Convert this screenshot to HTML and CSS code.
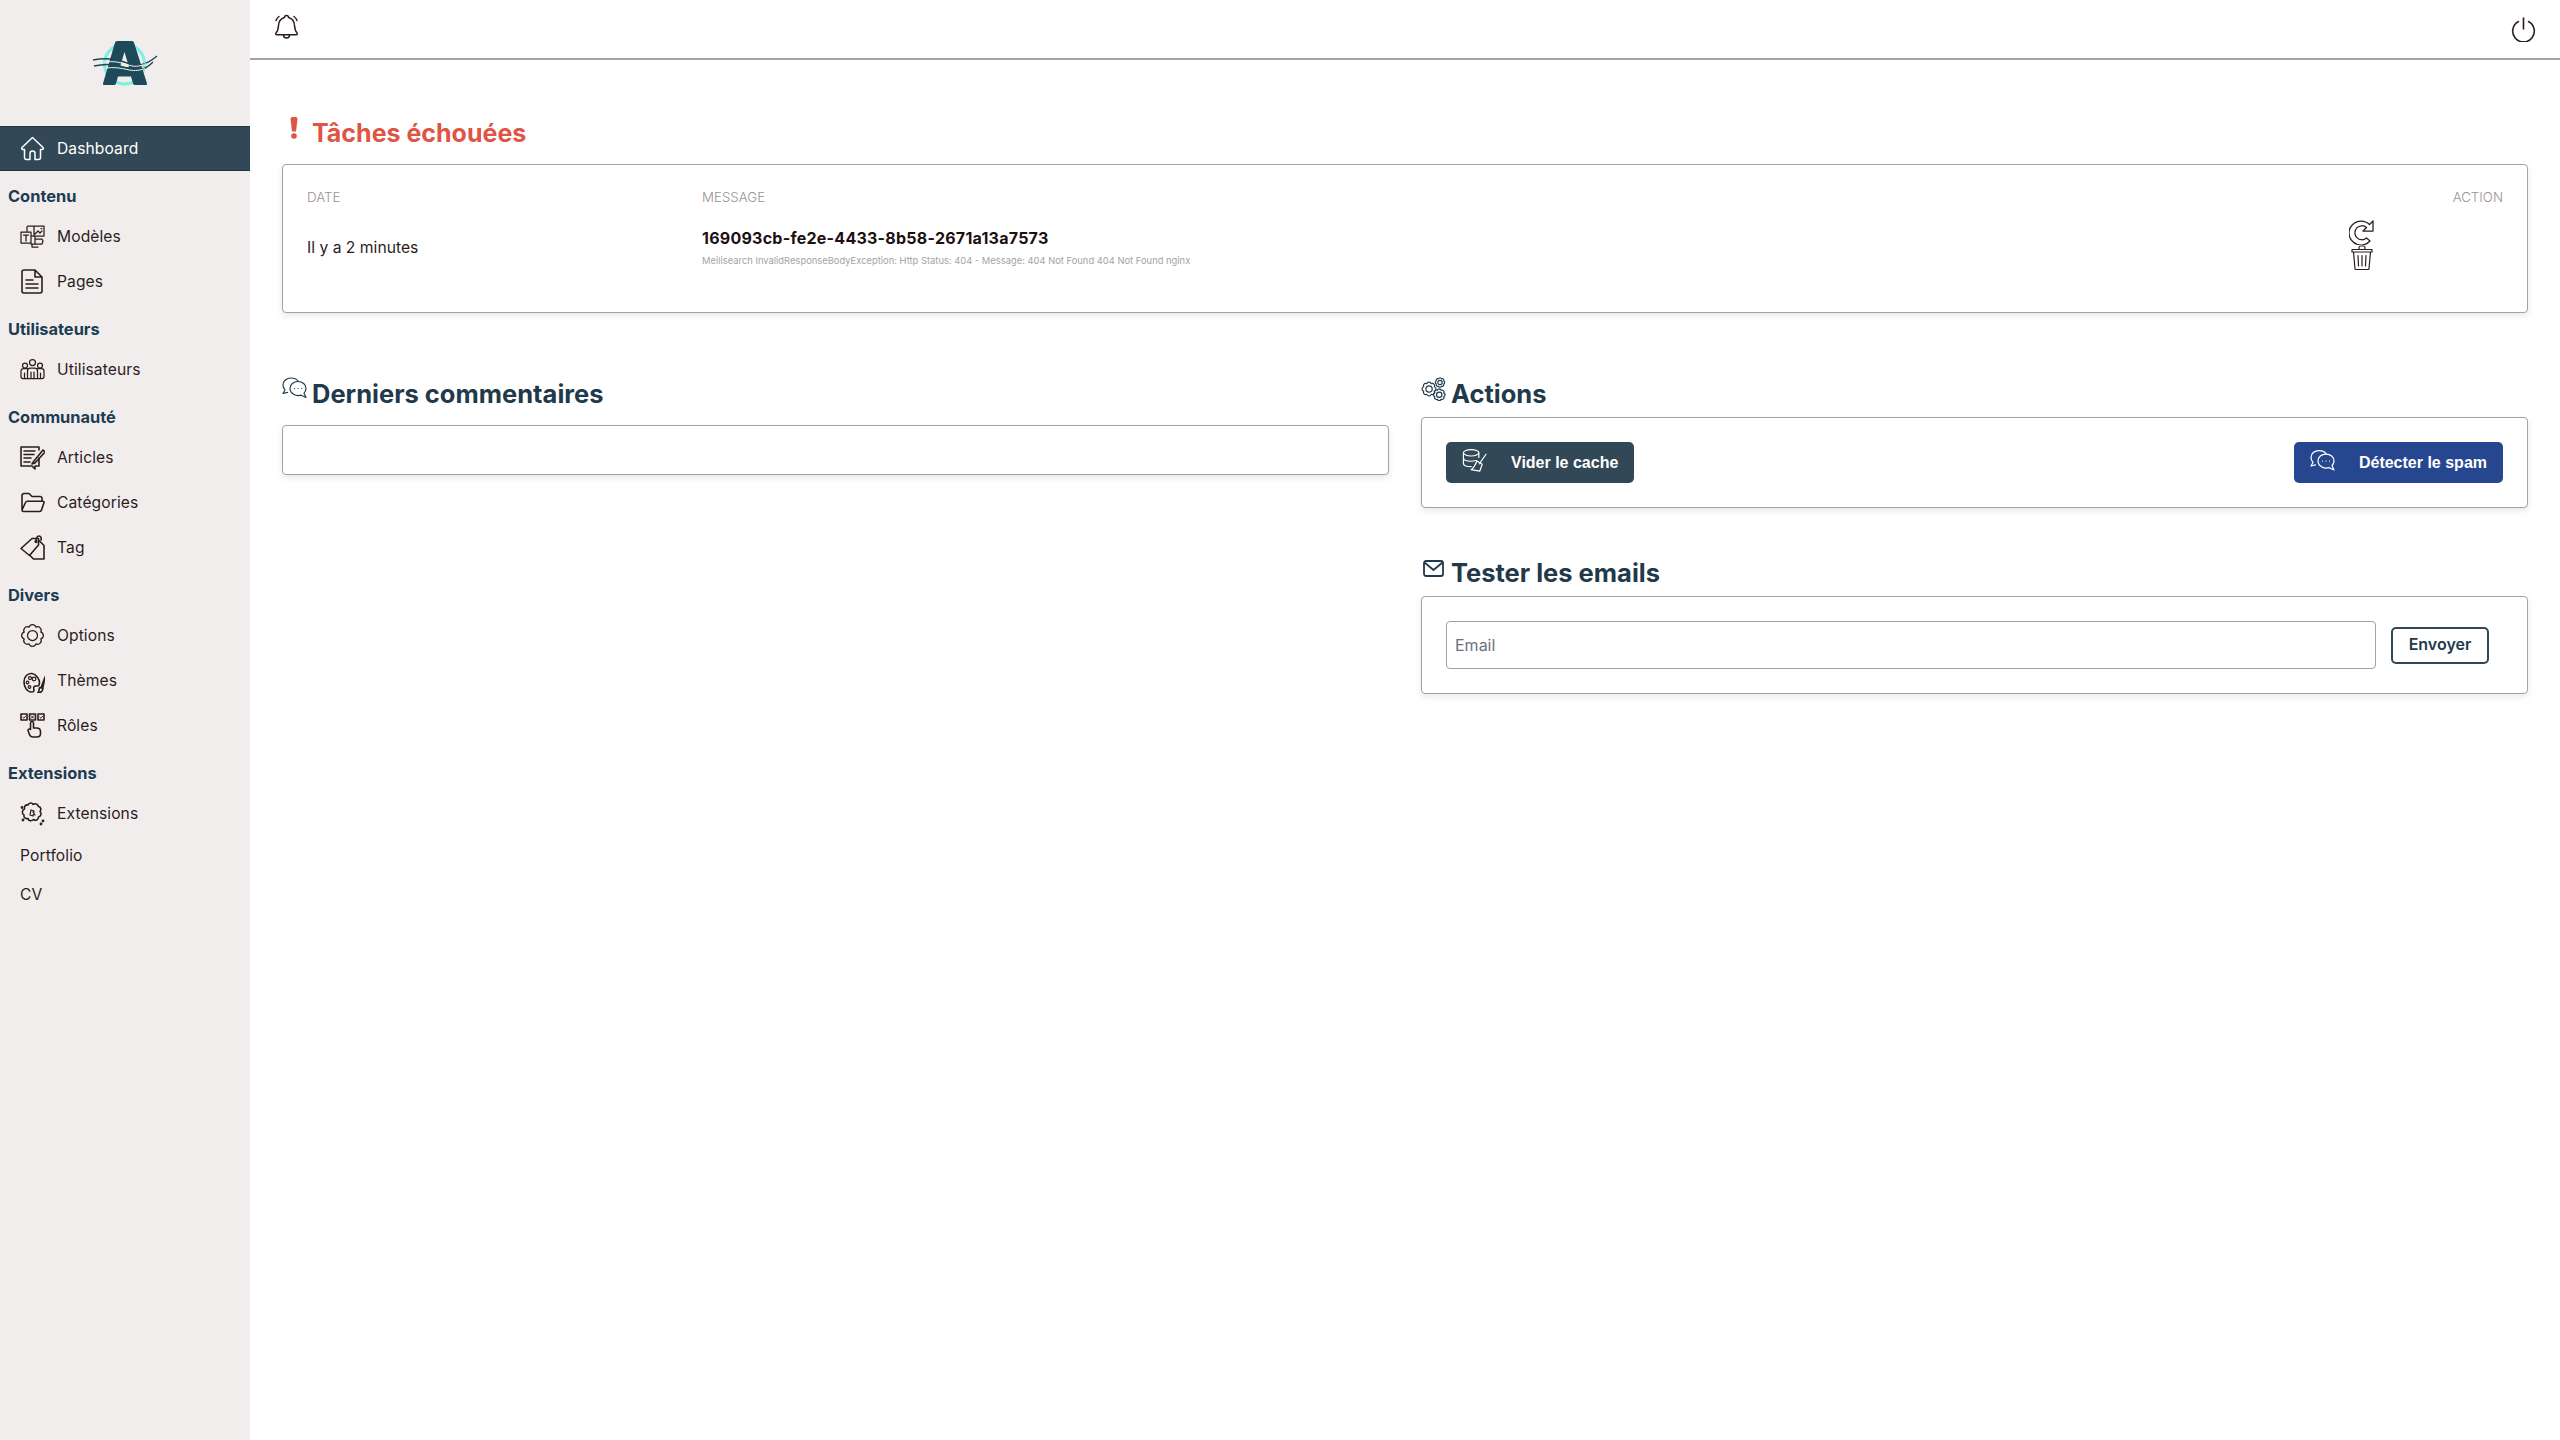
FILE: index.html
```html
<!DOCTYPE html>
<html lang="fr">
<head>
<meta charset="utf-8">
<title>Dashboard</title>
<link rel="stylesheet" href="styles.css">
</head>
<body>
<svg class="sprite" aria-hidden="true">
  <symbol id="gear" viewBox="0 0 25 25">
    <path vector-effect="non-scaling-stroke" d="M9.060 4.190A3.600 3.600 0 0 1 15.940 4.190 3.600 3.600 0 0 1 20.810 9.060 3.600 3.600 0 0 1 20.810 15.940 3.600 3.600 0 0 1 15.940 20.810 3.600 3.600 0 0 1 9.060 20.810 3.600 3.600 0 0 1 4.190 15.940 3.600 3.600 0 0 1 4.190 9.060 3.600 3.600 0 0 1 9.060 4.190z"/>
    <circle vector-effect="non-scaling-stroke" cx="12.500" cy="12.500" r="5"/>
  </symbol>
  <symbol id="chat" viewBox="0 0 25 22">
    <path d="M9 1C4.500 1 1 4 1 8c0 2 .8 3.500 2 5l-2 3.500 4.500-1.200M9 1c3 0 5.500 1 7 3"/>
    <path d="M16 4.500c4.500 0 8 3 8 7 0 2-1 3.500-2 4.700l2 4.300-4.800-2.300c-5.500 1.500-11.200-2-11.200-6.700 0-4 3.500-7 8-7z"/>
    <path d="M12.500 11.500h.01M16 11.500h.01M19.500 11.500h.01"/>
  </symbol>
</svg>
<div class="app">
  <aside class="sidebar">
    <div class="logo">
      <svg width="70" height="50" viewBox="0 0 70 50">
        <circle cx="34.500" cy="26" r="20" fill="none" stroke="#7ff0e0" stroke-width="3"/>
        <path d="M3 22c14-3 24-1 34 3s18 3 30-7M4 28c13-3 22-2 33 2s18 2 26-6" fill="none" stroke="#1d4a5b" stroke-width="1.400"/>
        <path d="M27 3h15q1.500 0 2 1.500l13 41q.3 1.500-1 1.500H45q-1.500 0-2-1.500l-2-7H28l-2 7q-.5 1.500-2 1.500H14q-1.500 0-1-1.500L25 4.500q.5-1.500 2-1.500zM34.500 14 30 29h9z" fill="#1d4a5b" fill-rule="evenodd"/>
        <path d="M14 24c9-1 16 0 23 2.500s12 2.500 19-1M16 30c8-1 15 0 21 1.500s11 1.500 18-1" fill="none" stroke="#f2eded" stroke-width="1"/>
      </svg>
    </div>
    <nav>
      <a class="item active">
        <svg class="ico" viewBox="0 0 25 25"><path d="M2 11.500 12.500 1.500 23 11.500c.8.900.2 2-1 2h-1.500v8a2 2 0 0 1-2 2H15v-6a2.500 2.500 0 0 0-5 0v6H6.500a2 2 0 0 1-2-2v-8H3c-1.200 0-1.800-1.100-1-2z"/></svg>
        <span>Dashboard</span>
      </a>
      <h3 class="group">Contenu</h3>
      <a class="item">
        <svg class="ico" viewBox="0 0 25 25"><path d="M7 7V3a1 1 0 0 1 1-1h6v5M1 8h10v11H1zM3.500 11h5M6 11v6M14 2h10v10H14zM15 10l3-3 2 2 2-2M21 4.500h.9M11 12h4v8h-4M15 15h7l1 2-1 3h-7zM12 20v3h6"/></svg>
        <span>Modèles</span>
      </a>
      <a class="item">
        <svg class="ico" viewBox="0 0 25 25"><path class="thick" d="M2 3a2 2 0 0 1 2-2h11l7 7v14a2 2 0 0 1-2 2H4a2 2 0 0 1-2-2zM15 1v7h7M6 11h7M6 15h12M6 19h12"/></svg>
        <span>Pages</span>
      </a>
      <h3 class="group">Utilisateurs</h3>
      <a class="item">
        <svg class="ico" viewBox="0 0 25 25"><circle cx="12.500" cy="5.500" r="3"/><circle cx="5" cy="8.500" r="2.500"/><circle cx="20" cy="8.500" r="2.500"/><path d="M7.500 21V14a3 3 0 0 1 3-3h4a3 3 0 0 1 3 3v7M7.500 21.500H3a2 2 0 0 1-2-2V14a2.500 2.500 0 0 1 2.500-2.500H7.500M17.500 11.500h4A2.500 2.500 0 0 1 24 14v5.500a2 2 0 0 1-2 2h-4.500M7.500 21.500h10M11 15v6.500M14 15v6.500M4.500 16v5M20.500 16v5"/></svg>
        <span>Utilisateurs</span>
      </a>
      <h3 class="group">Communauté</h3>
      <a class="item">
        <svg class="ico" viewBox="0 0 25 25"><path class="thick" d="M19 5V2H1v19h11l3 3v-3h4v-8M4 6h11M4 9.500h10M4 13h7M4 17h6"/><path class="thick" d="M14 16l-2 3 3-1 10-11-2-2z"/></svg>
        <span>Articles</span>
      </a>
      <a class="item">
        <svg class="ico" viewBox="0 0 25 25"><path class="thick" d="M2 20V5.500a2 2 0 0 1 2-2h5l3 3h8a2 2 0 0 1 2 2V11M2 20l3.500-7.500a2 2 0 0 1 1.800-1.200H23a1 1 0 0 1 1 1.300l-2.500 7.500a2 2 0 0 1-1.800 1.400H3.500A1.500 1.500 0 0 1 2 20z"/></svg>
        <span>Catégories</span>
      </a>
      <a class="item">
        <svg class="ico" viewBox="0 0 25 25"><path class="thick" d="M1 13.500 12 3.500h6.500V10L9.500 20.500zM19 5.500l5 5V24H13.500l-3.500-3.500M16 6.500c0-3 1-5.500 3-5.500s2.500 2 2 4"/><circle cx="16" cy="6.500" r="1"/></svg>
        <span>Tag</span>
      </a>
      <h3 class="group">Divers</h3>
      <a class="item">
        <svg class="ico" viewBox="0 0 25 25"><use href="#gear"/></svg>
        <span>Options</span>
      </a>
      <a class="item">
        <svg class="ico" viewBox="0 0 25 25"><path class="thick" d="M12 5.500c-5-.5-8 3.500-8 8.500s3 10 7.500 10c2.500 0 2.800-1.500 2.300-3s.2-3 2-3h1.500c1.800 0 2.200-1.800 2.200-3.800S16.500 6 12 5.500z"/><circle cx="10" cy="10" r="1.500"/><circle cx="14" cy="11" r="1.800"/><circle cx="7.500" cy="14.500" r="1.300"/><circle cx="9.500" cy="19" r="1.300"/><path class="thick" d="M25 9l-3.500 9.500 1.500.5zM20 19.500c-1.500 1-.5 4-2 5 2 .5 4.500-.5 5-4z"/></svg>
        <span>Thèmes</span>
      </a>
      <a class="item">
        <svg class="ico" viewBox="0 0 25 25"><path class="thick" d="M1 1h6v6H1zM9.500 1h6v6h-6zM18 1h6v6h-6z"/><path class="thin" d="M2.800 4.200l1 1 1.800-2M11.300 2.800l2.400 2.400M13.700 2.800l-2.400 2.400M19.800 4.200l1 1 1.800-2"/><path class="thick" d="M10.500 16.500V11a1.500 1.500 0 0 1 3 0v5h3c2.500 0 4 1.500 4 3.500v2c0 2-1.500 3.500-3.500 3.500H13c-2 0-3-1-3.500-2.500l-1.500-4c-.4-1.300 1.500-2 2.500-1z" transform="translate(0 -1)"/></svg>
        <span>Rôles</span>
      </a>
      <h3 class="group">Extensions</h3>
      <a class="item">
        <svg class="ico" viewBox="0 0 25 25"><path class="thick" d="M8 4c1-2.500 4-2.500 5-.5 2-1.500 5-.5 5.500 2 2.500.5 3 3 1.500 5 2 2 1 5-1.500 5.500 0 3-3 4-5 2.500-2 2-5 1.500-5.500-1-2.500.5-4.500-1-4-3.500-2.500-1.500-2-5 .5-6-.5-2.500 1-4.500 3.500-4z"/><path d="M11 9l3 1-1 5-3-1zM13 11l2 3"/><circle cx="2" cy="6.500" r=".8"/><circle cx="23" cy="20" r=".8"/><circle cx="21" cy="23" r=".8"/><circle cx="3" cy="19" r=".8"/></svg>
        <span>Extensions</span>
      </a>
      <a class="item plain"><span>Portfolio</span></a>
      <a class="item plain"><span>CV</span></a>
    </nav>
  </aside>

  <div class="content">
    <header class="topbar">
      <svg class="bell" viewBox="0 0 25 26"><path d="M12.500 1.500a2 2 0 0 1 2 2c4 1 5.800 4 6 8 .2 3 .7 5.500 2.500 7.500.6.800.2 1.800-.8 1.800H2.800c-1 0-1.400-1-.8-1.800 1.800-2 2.300-4.500 2.500-7.500.2-4 2-7 6-8a2 2 0 0 1 2-2zM9.500 21c0 4 6 4 6 0M5 2.500C3.500 3.500 2.500 5 2 6.500M20 2.500c1.500 1 2.500 2.500 3 4"/></svg>
      <svg class="power" viewBox="0 0 25 25"><path d="M7.500 4.500a10.800 10.800 0 1 0 10 0M12.500 1v11"/></svg>
    </header>

    <main class="main">
      <section>
        <h2 class="title danger">
          <svg class="bang" viewBox="0 0 8 22"><path d="M.5 2a2 2 0 0 1 2-2h3a2 2 0 0 1 2 2L6 14.500H2z"/><circle cx="4" cy="19" r="2.800"/></svg>
          <span>Tâches échouées</span>
        </h2>
        <div class="card failed">
          <div class="th">DATE</div>
          <div class="th">MESSAGE</div>
          <div class="th end">ACTION</div>
          <div class="when">Il y a 2 minutes</div>
          <div class="msg">
            <div class="uuid">169093cb-fe2e-4433-8b58-2671a13a7573</div>
            <div class="err">Meilisearch InvalidResponseBodyException: Http Status: 404 - Message: 404 Not Found 404 Not Found nginx</div>
          </div>
          <div class="acts">
            <svg class="ico" viewBox="0 0 25 25"><path d="M24 1v10H14l3.500-3.500A7 7 0 1 0 17.500 18l3.500 3A12 12 0 1 1 20.500 4.500z"/></svg>
            <svg class="trash" viewBox="0 0 22 25"><path d="M8 4V2.500A1.500 1.500 0 0 1 9.500 1h3A1.500 1.500 0 0 1 14 2.500V4M1 4.500h20v2.500H1zM2.500 7l1.500 16.500a1 1 0 0 0 1 1h12a1 1 0 0 0 1-1L19.500 7M7 10.500 7.500 21M11 10.500V21M15 10.500 14.500 21"/></svg>
          </div>
        </div>
      </section>

      <div class="cols">
        <section>
          <h2 class="title loose">
            <svg class="head-ico" viewBox="0 0 25 24"><use href="#chat" width="25" height="22"/></svg>
            <span>Derniers commentaires</span>
          </h2>
          <div class="card empty"></div>
        </section>
        <section>
          <h2 class="title">
            <svg class="head-ico" viewBox="0 0 25 24"><use href="#gear" x="0" y="4" width="16" height="16"/><use href="#gear" x="13.500" y="0" width="11" height="11"/><use href="#gear" x="11.500" y="11" width="13.500" height="13.500"/></svg>
            <span>Actions</span>
          </h2>
          <div class="card buttons">
            <button class="btn dark">
              <svg class="ico" viewBox="0 0 26 25"><ellipse cx="9.500" cy="4.500" rx="8" ry="3.300"/><path d="M1.500 4.500v11c0 2 3.500 3.300 8 3.300M1.500 10c0 2 3.500 3.300 8 3.300 2 0 3.500-.3 5-.8M17.500 4.500v5M25 6l-7 10M15.500 13l5.500 3.500-2.500 7-9-1.500c2-1.500 4-3.500 6-9z"/></svg>
              <span>Vider le cache</span>
            </button>
            <button class="btn blue">
              <svg class="ico" viewBox="0 0 25 22"><use href="#chat" width="25" height="22"/></svg>
              <span>Détecter le spam</span>
            </button>
          </div>
          <h2 class="title spaced">
            <svg class="mail" viewBox="0 0 21 17"><rect x="1" y="1" width="19" height="15" rx="2"/><path d="M1.500 2.500 10.500 10l9-7.500"/></svg>
            <span>Tester les emails</span>
          </h2>
          <form class="card mailform">
            <input class="field" type="email" placeholder="Email">
            <button class="send" type="button">Envoyer</button>
          </form>
        </section>
      </div>
    </main>
  </div>
</div>
</body>
</html>
```

FILE: styles.css
```css
* { box-sizing: border-box; }
html, body { margin: 0; padding: 0; height: 100%; }
body {
  font-family: "Inter", "Roboto", sans-serif;
  color: #2b1d1d;
  background: #fff;
}
.sprite { display: none; }
.app { display: flex; min-height: 1440px; }

/* Sidebar */
.sidebar { width: 250px; flex: none; background: #f2eded; }
.logo { height: 126px; display: flex; justify-content: center; padding-top: 38px; }
.logo svg { margin-left: -1px; display: block; }
nav { display: flex; flex-direction: column; }
.item {
  height: 45px;
  display: flex;
  align-items: center;
  gap: 12px;
  padding-left: 20px;
  font-size: 15.600px;
  letter-spacing: .1px;
  color: #2b1d1d;
}
.item.active {
  background: #324856;
  color: #fff;
  border-top: 1px solid #1f3542;
  border-bottom: 1px solid #1f3542;
}
.item.plain { height: 39px; }
.group {
  margin: 14px 0 5px;
  padding-left: 8px;
  height: 24px;
  line-height: 23px;
  font-size: 16.400px;
  font-weight: 700;
  color: #1c3c52;
}
.ico {
  width: 25px;
  height: 25px;
  flex: none;
  fill: none;
  stroke: currentColor;
  stroke-width: 1.250;
  stroke-linecap: round;
  stroke-linejoin: round;
}
.ico .thick { stroke-width: 1.600; }
.ico .thin { stroke-width: 1; }
.active .ico { stroke-width: 1.500; }

/* Top bar */
.content { flex: 1; min-width: 0; }
.topbar {
  height: 60px;
  border-bottom: 2px solid #aaa09e;
  display: flex;
  justify-content: space-between;
  align-items: flex-start;
  padding: 14px 24px 0 24px;
}
.bell, .power {
  fill: none;
  stroke: #2b1d1d;
  stroke-width: 1.500;
  stroke-linecap: round;
  stroke-linejoin: round;
  display: block;
}
.bell { width: 25px; height: 26px; }
.power { width: 25px; height: 25px; margin-top: 3px; stroke-width: 1.600; }

/* Main */
.main { padding: 56px 32px 0 32px; }
.title {
  display: flex;
  align-items: flex-start;
  margin: 0 0 8px;
  height: 32px;
  line-height: 34px;
  font-size: 25.500px;
  font-weight: 700;
  color: #22394a;
}
.title.danger { color: #df5445; margin-bottom: 16px; padding-left: 8px; font-size: 25px; }
.title.loose { margin-bottom: 16px; }
.title.spaced { margin-top: 48px; padding-left: 2px; }
.bang { width: 8px; height: 22px; margin: 1px 14px 0 0; fill: #df5445; flex: none; }
.head-ico {
  width: 25px;
  height: 24px;
  margin-right: 5px;
  flex: none;
  fill: none;
  stroke: #22394a;
  stroke-width: 1.200;
  stroke-linecap: round;
  stroke-linejoin: round;
}
.mail {
  width: 21px;
  height: 17px;
  margin: 4px 7px 0 0;
  flex: none;
  fill: none;
  stroke: #22394a;
  stroke-width: 1.800;
  stroke-linejoin: round;
}

.card {
  background: #fff;
  border: 1px solid #a89f9f;
  border-radius: 4px;
  box-shadow: 0 3px 6px rgba(110, 140, 180, .18);
}
.failed {
  height: 149px;
  padding: 24px;
  display: grid;
  grid-template-columns: 395px 1fr 154px;
  grid-template-rows: 16px auto;
  row-gap: 15px;
}
.th { font-size: 13.300px; line-height: 16px; font-weight: 300; color: #9c9292; }
.th.end { text-align: right; }
.when { font-size: 15.700px; line-height: 18px; margin-top: 19px; }
.msg { padding-top: 9px; }
.uuid { font-size: 16px; letter-spacing: .25px; line-height: 18px; font-weight: 700; color: #1c1010; }
.err { margin-top: 8px; font-size: 9.400px; line-height: 12px; color: #a89f9f; white-space: nowrap; }
.acts { display: flex; flex-direction: column; width: 25px; }
.acts .ico { display: block; }
.trash {
  width: 22px;
  height: 25px;
  margin-left: 2px;
  fill: none;
  stroke: #2b1d1d;
  stroke-width: 1.200;
  stroke-linejoin: round;
  stroke-linecap: round;
  display: block;
}

.cols {
  display: grid;
  grid-template-columns: 1107px 1107px;
  column-gap: 32px;
  margin-top: 64px;
}
.empty { height: 50px; }
.buttons {
  height: 91px;
  padding: 24px;
  display: flex;
  justify-content: space-between;
}
.btn {
  height: 41px;
  border: 0;
  border-radius: 5px;
  padding: 0 16px;
  display: flex;
  align-items: center;
  gap: 24px;
  color: #fff;
  font-family: "Liberation Sans", Arial, sans-serif;
  font-weight: 700;
  font-size: 16px;
}
.btn .ico { margin-top: -4px; }
.dark { background: #324856; }
.blue { background: #264690; }
.mailform {
  height: 98px;
  padding: 24px;
  display: flex;
  align-items: center;
  gap: 15px;
}
.field {
  width: 930px;
  height: 48px;
  flex: none;
  border: 1px solid #a89f9f;
  border-radius: 4px;
  padding: 0 8px;
  font-family: "Inter", sans-serif;
  font-size: 16px;
  outline: none;
}
.field::placeholder { color: #6b7280; opacity: 1; }
.send {
  width: 98px;
  height: 37px;
  padding: 0 0 2px;
  background: #fff;
  border: 2px solid #324856;
  border-radius: 5px;
  color: #22394a;
  font-family: "Inter", sans-serif;
  font-weight: 600;
  font-size: 16px;
}
```
